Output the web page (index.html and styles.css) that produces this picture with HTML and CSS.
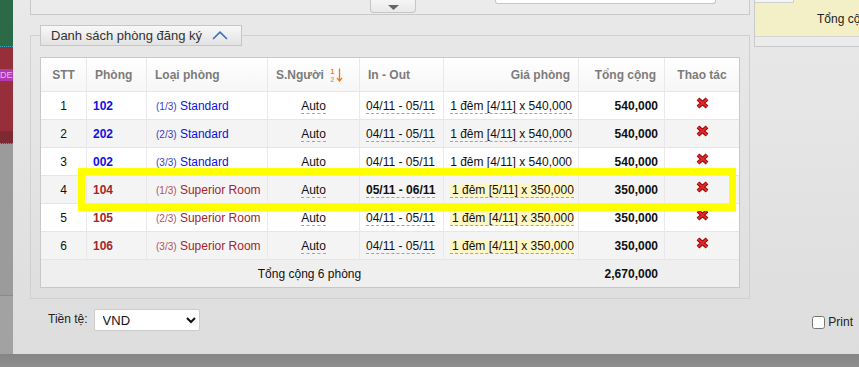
FILE: index.html
```html
<!DOCTYPE html>
<html>
<head>
  <meta charset="utf-8">
  <link rel="stylesheet" href="styles.css">
</head>
<body>
  <div class="screen">
    <!-- app page behind the dialog -->
    <div class="behind">
      <div class="behind-green"></div>
      <div class="behind-red">
        <span class="behind-tag">DE</span>
        <div class="behind-band"></div>
      </div>
      <div class="behind-grey"></div>
      <div class="behind-floor"></div>
    </div>

    <div class="dialog">
      <div class="dialog-body">
        <div class="main-col">
          <div class="top-box">
            <div class="toggle-tab">
              <svg width="11" height="5" viewBox="0 0 11 5"><polygon points="0,0 11,0 5.5,5" fill="#666"/></svg>
            </div>
            <div class="top-input"></div>
          </div>

          <fieldset class="rooms">
            <legend class="rooms-legend">
              <span>Danh sách phòng đăng ký</span>
              <svg width="16" height="9" viewBox="0 0 16 9"><polyline points="1,8 8,1.2 15,8" fill="none" stroke="#3d6fb3" stroke-width="1.6"/></svg>
            </legend>

            <table class="rooms-table">
              <thead>
                <tr>
                  <th class="w-stt c-center">STT</th>
                  <th class="w-room">Phòng</th>
                  <th class="w-type">Loại phòng</th>
                  <th class="w-people">S.Người
                    <svg class="sort-icon" width="14" height="14" viewBox="0 0 14 14">
                      <text x="0.5" y="6" font-size="7" font-weight="bold" fill="#f07a18" font-family="Liberation Sans, sans-serif">1</text>
                      <text x="0.5" y="13.5" font-size="7" font-weight="bold" fill="#f5a43a" font-family="Liberation Sans, sans-serif">2</text>
                      <path d="M9.5 0.5 V12.5 M7 10 L9.5 13 L12 10" fill="none" stroke="#f07a18" stroke-width="1.3"/>
                    </svg>
                  </th>
                  <th class="w-date">In - Out</th>
                  <th class="w-price c-right">Giá phòng</th>
                  <th class="w-total c-right">Tổng cộng</th>
                  <th class="w-act c-center">Thao tác</th>
                </tr>
              </thead>
              <tbody>
                <tr>
                  <td class="c-center">1</td>
                  <td class="room std">102</td>
                  <td class="type std"><small>(1/3)</small> Standard</td>
                  <td class="c-center"><span class="dash">Auto</span></td>
                  <td><span class="dash">04/11 - 05/11</span></td>
                  <td class="c-right"><span class="dash">1 đêm [4/11] x 540,000</span></td>
                  <td class="c-right num">540,000</td>
                  <td><svg class="del" width="13" height="12" viewBox="0 0 13 12"><path d="M2 2 L11 10 M11 2 L2 10" stroke="#8a0b0b" stroke-width="4"/><path d="M2 2 L11 10 M11 2 L2 10" stroke="#e42626" stroke-width="2.3"/></svg></td>
                </tr>
                <tr>
                  <td class="c-center">2</td>
                  <td class="room std">202</td>
                  <td class="type std"><small>(2/3)</small> Standard</td>
                  <td class="c-center"><span class="dash">Auto</span></td>
                  <td><span class="dash">04/11 - 05/11</span></td>
                  <td class="c-right"><span class="dash">1 đêm [4/11] x 540,000</span></td>
                  <td class="c-right num">540,000</td>
                  <td><svg class="del" width="13" height="12" viewBox="0 0 13 12"><path d="M2 2 L11 10 M11 2 L2 10" stroke="#8a0b0b" stroke-width="4"/><path d="M2 2 L11 10 M11 2 L2 10" stroke="#e42626" stroke-width="2.3"/></svg></td>
                </tr>
                <tr>
                  <td class="c-center">3</td>
                  <td class="room std">002</td>
                  <td class="type std"><small>(3/3)</small> Standard</td>
                  <td class="c-center"><span class="dash">Auto</span></td>
                  <td><span class="dash">04/11 - 05/11</span></td>
                  <td class="c-right"><span class="dash">1 đêm [4/11] x 540,000</span></td>
                  <td class="c-right num">540,000</td>
                  <td><svg class="del" width="13" height="12" viewBox="0 0 13 12"><path d="M2 2 L11 10 M11 2 L2 10" stroke="#8a0b0b" stroke-width="4"/><path d="M2 2 L11 10 M11 2 L2 10" stroke="#e42626" stroke-width="2.3"/></svg></td>
                </tr>
                <tr>
                  <td class="c-center">4</td>
                  <td class="room sup">104</td>
                  <td class="type sup"><small>(1/3)</small> Superior Room</td>
                  <td class="c-center"><span class="dash">Auto</span></td>
                  <td><span class="dash bold">05/11 - 06/11</span></td>
                  <td class="c-right"><span class="dash hl">1 đêm [5/11] x 350,000</span></td>
                  <td class="c-right num">350,000</td>
                  <td><svg class="del" width="13" height="12" viewBox="0 0 13 12"><path d="M2 2 L11 10 M11 2 L2 10" stroke="#8a0b0b" stroke-width="4"/><path d="M2 2 L11 10 M11 2 L2 10" stroke="#e42626" stroke-width="2.3"/></svg></td>
                </tr>
                <tr>
                  <td class="c-center">5</td>
                  <td class="room sup">105</td>
                  <td class="type sup"><small>(2/3)</small> Superior Room</td>
                  <td class="c-center"><span class="dash">Auto</span></td>
                  <td><span class="dash">04/11 - 05/11</span></td>
                  <td class="c-right"><span class="dash hl">1 đêm [4/11] x 350,000</span></td>
                  <td class="c-right num">350,000</td>
                  <td><svg class="del" width="13" height="12" viewBox="0 0 13 12"><path d="M2 2 L11 10 M11 2 L2 10" stroke="#8a0b0b" stroke-width="4"/><path d="M2 2 L11 10 M11 2 L2 10" stroke="#e42626" stroke-width="2.3"/></svg></td>
                </tr>
                <tr>
                  <td class="c-center">6</td>
                  <td class="room sup">106</td>
                  <td class="type sup"><small>(3/3)</small> Superior Room</td>
                  <td class="c-center"><span class="dash">Auto</span></td>
                  <td><span class="dash">04/11 - 05/11</span></td>
                  <td class="c-right"><span class="dash hl">1 đêm [4/11] x 350,000</span></td>
                  <td class="c-right num">350,000</td>
                  <td><svg class="del" width="13" height="12" viewBox="0 0 13 12"><path d="M2 2 L11 10 M11 2 L2 10" stroke="#8a0b0b" stroke-width="4"/><path d="M2 2 L11 10 M11 2 L2 10" stroke="#e42626" stroke-width="2.3"/></svg></td>
                </tr>
                <tr class="sum-row">
                  <td colspan="6" class="c-center">Tổng cộng 6 phòng</td>
                  <td class="c-right num">2,670,000</td>
                  <td></td>
                </tr>
              </tbody>
            </table>
          </fieldset>
        </div>

        <div class="side-col">
          <div class="side-box">
            <div class="side-top"><span class="side-cell"></span></div>
            <div class="side-total">Tổng cộng</div>
          </div>
        </div>
      </div>

      <div class="footer">
        <label class="currency-label" for="currency">Tiền tệ:</label>
        <select id="currency" class="currency">
          <option>VND</option>
          <option>USD</option>
        </select>
        <label class="print"><input type="checkbox">Print</label>
      </div>
    </div>

    <div class="shade"></div>

    <!-- annotation drawn over the screenshot -->
    <div class="mark"></div>
  </div>
</body>
</html>
```

FILE: styles.css
```css
body {
  margin: 0;
  font-family: "Liberation Sans", Arial, sans-serif;
  font-size: 12px;
  color: #111;
  overflow: hidden;
}

.screen {
  position: relative;
  display: grid;
  grid-template-columns: 13px 846px;
  grid-template-rows: 354px 13px;
  width: 859px;
  height: 367px;
  overflow: hidden;
}

/* page behind the dialog */
.behind {
  display: flex;
  flex-direction: column;
  overflow: hidden;
}

.behind-green {
  height: 46px;
  background: #2c6946;
  border-bottom: 1px dotted #3aaab4;
}

.behind-red {
  height: 96px;
  display: flex;
  flex-direction: column;
  background: #962f3a;
  border-bottom: 1px dotted #3aaab4;
}

.behind-tag {
  margin-top: 22px;
  height: 12px;
  line-height: 12px;
  font-size: 9px;
  color: #eab6ec;
  background: #b03ab3;
  white-space: nowrap;
}

.behind-band {
  margin-top: auto;
  height: 12px;
  background: #7e2a34;
}

.behind-grey {
  height: 151px;
  background: #9b9b9b;
  border-bottom: 1px solid #8a8a8a;
}

.behind-floor {
  flex: 1;
  background: #a2a2a2;
}

.shade {
  grid-column: 1 / 3;
  background: linear-gradient(#858585, #8f8f8f);
}

/* dialog */
.dialog {
  background: linear-gradient(#e9e9e9, #dddddd);
  overflow: hidden;
}

.dialog-body {
  display: flex;
  align-items: flex-start;
  gap: 4px;
  padding-left: 17px;
}

.main-col {
  width: 720px;
  flex: none;
}

.top-box {
  height: 14px;
  display: flex;
  align-items: flex-start;
  border: 1px solid #c9c9c9;
  border-top: 0;
  background: #ebebeb;
}

.toggle-tab {
  margin-left: 339px;
  width: 46px;
  height: 13px;
  box-sizing: border-box;
  display: flex;
  justify-content: center;
  padding-top: 5px;
  border: 1px solid #c6c6c6;
  border-top: 0;
  border-radius: 0 0 4px 4px;
  background: linear-gradient(#f5f5f5, #e9e9e9);
}

.toggle-tab svg {
  display: block;
}

.top-input {
  margin-left: 79px;
  width: 219px;
  height: 3px;
  background: #fff;
  border: 1px solid #c6c6c6;
  border-top: 0;
  border-radius: 0 0 3px 3px;
}

/* room list */
.rooms {
  margin: 10px 0 0;
  padding: 11px 9px 10px;
  border: 1px solid #d0d0d0;
  min-width: 0;
}

.rooms-legend {
  height: 21px;
  box-sizing: border-box;
  display: flex;
  align-items: center;
  gap: 10px;
  padding: 0 13px 0 10px;
  border: 1px solid #c6c6c6;
  background: linear-gradient(#f8f8f8, #e2e2e2);
  font-size: 13px;
  color: #333;
}

.rooms-legend svg {
  display: block;
}

.rooms-table {
  width: 100%;
  table-layout: fixed;
  border-collapse: separate;
  border-spacing: 0;
  border: 1px solid #c8c8c8;
  background: #fff;
}

.rooms-table th,
.rooms-table td {
  box-sizing: border-box;
  border-left: 1px solid #e9e9e9;
  white-space: nowrap;
  overflow: hidden;
}

.rooms-table th:first-child,
.rooms-table td:first-child {
  border-left: 0;
}

.rooms-table th {
  height: 33px;
  padding: 0 8px;
  text-align: left;
  font-weight: bold;
  color: #7c7c7c;
  background: linear-gradient(#ffffff, #f6f6f6);
}

.rooms-table td {
  height: 28px;
  padding: 0 6px;
  border-top: 1px solid #e6e6e6;
}

.rooms-table tbody tr:nth-child(even) td {
  background: #f4f4f4;
}

.w-stt { width: 45px; }
.w-room { width: 60px; }
.w-type { width: 121px; }
.w-people { width: 92px; }
.w-date { width: 84px; }
.w-price { width: 135px; }
.w-total { width: 86px; }
.w-act { width: 75px; }

.rooms-table .c-center { text-align: center; }
.rooms-table .c-right { text-align: right; }

.sort-icon {
  vertical-align: -3px;
  margin-left: 3px;
}

.room {
  font-weight: bold;
}

.type {
  padding-left: 9px !important;
}

.type small {
  font-size: 10px;
}

.std { color: #1010e6; }
.std small { color: #3a3ac8; }
.sup { color: #a3262e; }
.sup small { color: #b0535c; }

.dash {
  border-bottom: 1px dashed #a3a3a3;
}

.bold {
  font-weight: bold;
}

.hl {
  background: #fff6c6;
  padding-left: 2px;
}

.num {
  font-weight: bold;
}

.del {
  display: block;
  margin: -6px auto 0;
}

.rooms-table .sum-row td {
  background: #efefef;
  border-left: 0;
}

/* right side panel */
.side-col {
  flex: 0 0 200px;
}

.side-box {
  height: 46px;
  border-left: 1px solid #c9c9c9;
  border-bottom: 1px solid #c9c9c9;
  background: #ebebeb;
}

.side-top {
  height: 3px;
  display: flex;
  background: #f3efc6;
}

.side-cell {
  width: 39px;
  box-sizing: border-box;
  border-right: 1px solid #cfcfcf;
  border-bottom: 1px solid #cfcfcf;
  background: #f4f4f4;
}

.side-total {
  height: 33px;
  line-height: 33px;
  padding-left: 62px;
  background: #f3efc6;
  border-bottom: 1px solid #d6d6d6;
  white-space: nowrap;
  color: #222;
}

/* footer */
.footer {
  display: flex;
  align-items: center;
  padding: 10px 6px 0 35px;
}

.currency-label {
  align-self: flex-start;
  margin-top: 3px;
  line-height: 14px;
  color: #222;
}

.currency {
  margin-left: 6px;
  width: 106px;
  height: 22px;
  padding: 0 4px;
  font-family: "Liberation Sans", Arial, sans-serif;
  font-size: 13px;
  color: #111;
  background: #fff;
  border: 1px solid #cccccc;
  border-radius: 2px;
}

.print {
  margin-left: auto;
  margin-top: 4px;
  display: flex;
  align-items: center;
  color: #222;
}

.print input {
  margin: 0 3px 0 0;
  width: 13px;
  height: 13px;
}

.mark {
  position: absolute;
  left: 78px;
  top: 168px;
  width: 658px;
  height: 43px;
  box-sizing: border-box;
  border: 7px solid #ffff00;
}
```
